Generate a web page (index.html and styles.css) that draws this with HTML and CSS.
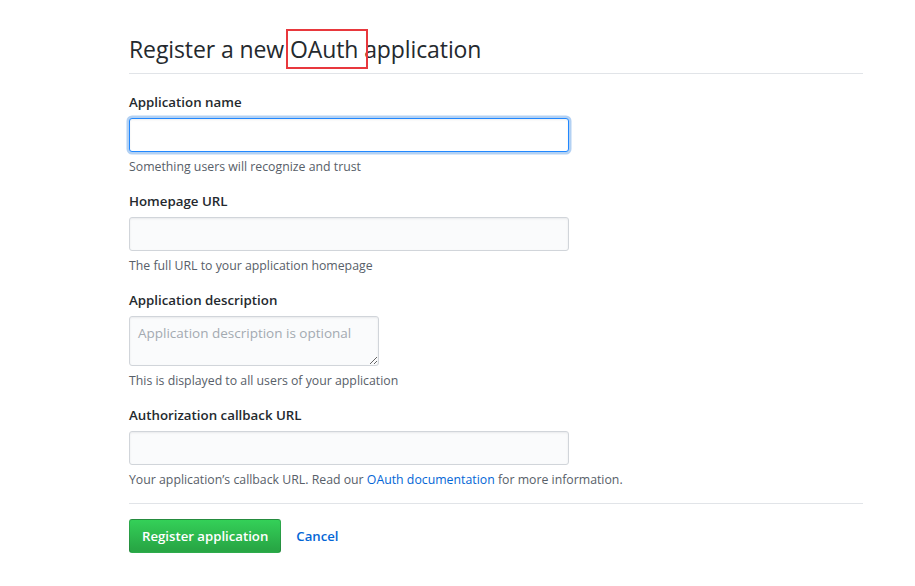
FILE: index.html
```html
<!DOCTYPE html>
<html lang="en">
<head>
<meta charset="utf-8">
<title>Register a new OAuth application</title>
<link rel="stylesheet" href="styles.css">
</head>
<body>
<div class="page">
  <h1 class="title">Register a new <span class="mark">OAuth </span>application</h1>
  <form class="form">
    <div class="group">
      <label class="label" for="name">Application name</label>
      <input class="field focus" id="name" type="text">
      <p class="note">Something users will recognize and trust</p>
    </div>
    <div class="group">
      <label class="label" for="home">Homepage URL</label>
      <input class="field" id="home" type="text">
      <p class="note">The full URL to your application homepage</p>
    </div>
    <div class="group">
      <label class="label" for="desc">Application description</label>
      <textarea class="field area" id="desc" placeholder="Application description is optional"></textarea>
      <p class="note">This is displayed to all users of your application</p>
    </div>
    <div class="group">
      <label class="label" for="cb">Authorization callback URL</label>
      <input class="field" id="cb" type="text">
      <p class="note">Your application’s callback URL. Read our <a class="link" href="#">OAuth documentation</a> for more information.</p>
    </div>
    <div class="actions">
      <button class="btn" type="button">Register application</button>
      <a class="cancel" href="#">Cancel</a>
    </div>
  </form>
</div>
</body>
</html>
```
FILE: styles.css
```css
html, body {
  margin: 0;
  padding: 0;
  background: #ffffff;
}
body {
  font-family: "Open Sans", "Noto Sans", "Liberation Sans", sans-serif;
  color: #24292e;
}
.page {
  width: 734px;
  margin-left: 129px;
  padding-top: 31px;
}
.title {
  margin: 0;
  font-size: 23px;
  font-weight: 400;
  line-height: 36px;
  padding-bottom: 6px;
  border-bottom: 1px solid #e1e4e8;
  letter-spacing: -0.1px;
}
.mark {
  outline: 2px solid #e8383d;
  outline-offset: 2px;
  padding-left: 0;
}
.form {
  padding-top: 18px;
}
.group {
  display: flex;
  flex-direction: column;
  align-items: flex-start;
  margin-bottom: 16px;
}
.label {
  font-size: 13.3px;
  font-weight: 600;
  line-height: 20px;
  margin-bottom: 6px;
}
.field {
  box-sizing: border-box;
  width: 440px;
  height: 34px;
  border: 1px solid #d1d5da;
  border-radius: 3px;
  background: #fafbfc;
  box-shadow: inset 0 1px 2px rgba(27, 31, 35, 0.075);
  margin: 0;
  font-family: inherit;
  font-size: 14px;
  padding: 6px 8px;
}
.focus {
  background: #ffffff;
  border-color: #2188ff;
  box-shadow: inset 0 1px 2px rgba(27, 31, 35, 0.075), 0 0 0 2.5px rgba(3, 102, 214, 0.3);
  outline: none;
}
.area {
  width: 250px;
  height: 50px;
  resize: vertical;
  font-size: 13.5px;
  line-height: 20px;
  padding: 6px 8px;
}
.area::placeholder {
  color: #a3aab1;
}
.note {
  margin: 6px 0 0;
  font-size: 12.3px;
  line-height: 17px;
  color: #586069;
}
.link {
  color: #0366d6;
  text-decoration: none;
}
.actions {
  border-top: 1px solid #e1e4e8;
  margin-top: -1px;
  padding-top: 15px;
  display: flex;
  align-items: center;
  gap: 15px;
}
.btn {
  box-sizing: border-box;
  height: 34px;
  padding: 0 12px;
  border: 1px solid rgba(27, 31, 35, 0.2);
  border-radius: 3px;
  background: linear-gradient(#34d058, #28a745 90%);
  color: #ffffff;
  font-family: inherit;
  font-size: 13.2px;
  font-weight: 600;
}
.cancel {
  color: #0366d6;
  font-size: 13.2px;
  font-weight: 600;
  text-decoration: none;
}
```
